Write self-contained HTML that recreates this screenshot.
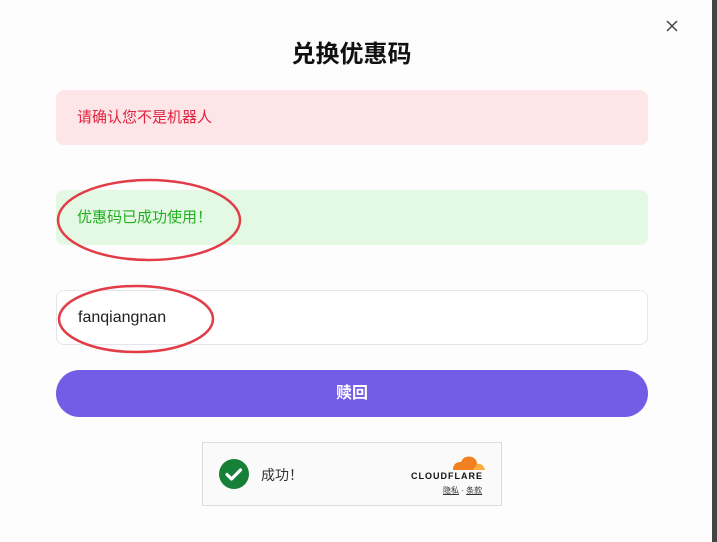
<!DOCTYPE html>
<html><head><meta charset="utf-8"><style>
body{margin:0;width:717px;height:542px;background:#fdfdfd;position:relative;overflow:hidden;font-family:"Liberation Sans","Noto Sans CJK SC",sans-serif}
.strip{position:absolute;left:712px;top:0;width:5px;height:542px;background:#444}
.t{position:absolute;left:0;width:703px;top:34px;text-align:center;font-size:24px;font-weight:bold;color:#111}
.box{position:absolute;left:56px;width:592px;height:55px;border-radius:8px;box-sizing:border-box;padding-left:21px;line-height:55px;font-size:15px}
.r{top:90px;background:#fde5e8;color:#e0233f}
.g{top:190px;background:#e3f9e3;color:#22b022}
.in{top:290px;background:#fff;border:1px solid #e4e6eb;color:#222;font-size:16px;line-height:53px}
.btn{position:absolute;left:56px;top:370px;width:592px;height:47px;border-radius:24px;background:#735ce6;color:#fff;font-weight:bold;font-size:16px;text-align:center;line-height:47px}
.cf{position:absolute;left:202px;top:442px;width:300px;height:64px;box-sizing:border-box;background:#fafafa;border:1px solid #ddd}
</style></head><body>
<div class="strip"></div>
<div class="t">兑换优惠码</div>
<svg style="position:absolute;left:666px;top:20px" width="12" height="12" viewBox="0 0 12 12"><path d="M1 1L11 11M11 1L1 11" stroke="#444" stroke-width="1.5"/></svg>
<div class="box r">请确认您不是机器人</div>
<div class="box g">优惠码已成功使用！</div>
<div class="box in">fanqiangnan</div>
<div class="btn">赎回</div>
<div class="cf">
<svg style="position:absolute;left:16px;top:16px" width="30" height="30" viewBox="0 0 30 30"><circle cx="15" cy="15" r="15" fill="#168038"/><path d="M8 15.5l4.5 4.5 9-9" stroke="#fff" stroke-width="3.2" fill="none" stroke-linecap="round" stroke-linejoin="round"/></svg>
<div style="position:absolute;left:58px;top:22px;font-size:14px;color:#333">成功！</div>
<svg style="position:absolute;left:244px;top:10px" width="40" height="18" viewBox="0 0 40 18"><path d="M6 17 Q6 9 14 9 Q17 2 25 4 Q30 6 30 11 Q36 10 38 17Z" fill="#f38020"/><path d="M30 11 Q36 10 38 17 H26Z" fill="#faae40"/></svg>
<div style="position:absolute;left:208px;top:28px;font-size:9px;font-weight:bold;letter-spacing:1px;color:#111">CLOUDFLARE</div>
<div style="position:absolute;left:240px;top:42px;font-size:8px;color:#333"><u>隐私</u> · <u>条款</u></div>
</div>
<svg style="position:absolute;left:0;top:0" width="717" height="542"><ellipse cx="149" cy="220" rx="91" ry="40" fill="none" stroke="#e23c46" stroke-width="2.5"/><ellipse cx="136" cy="319" rx="77" ry="33" fill="none" stroke="#e23c46" stroke-width="2.5"/></svg>
</body></html>
